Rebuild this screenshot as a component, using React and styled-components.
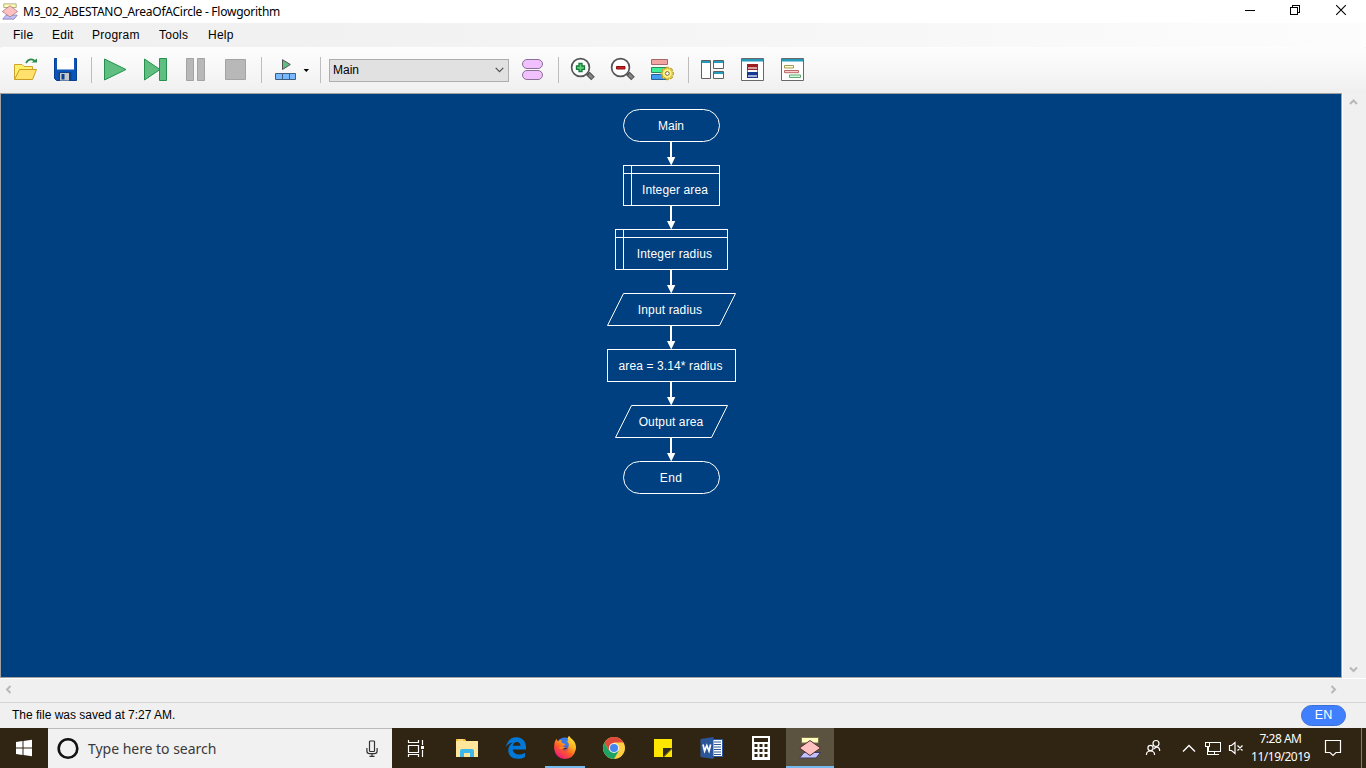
import React from "react";
import styled, { createGlobalStyle } from "styled-components";

const Global = createGlobalStyle`
  html, body { margin: 0; padding: 0; background: #f0f0f0; overflow: hidden; }
  * { box-sizing: border-box; }
  svg { display: block; flex: none; }
`;
const arial = `"Liberation Sans", Arial, sans-serif`;
const segoe = `"Noto Sans", "Open Sans", sans-serif`;

const Screen = styled.div`
  width: 1366px; height: 768px; display: flex; flex-direction: column;
  font-family: ${arial}; font-size: 12px; color: #000; background: #f0f0f0;
`;
const TitleBar = styled.header`
  height: 23px; background: #fff; display: flex; align-items: center; padding-left: 2px;
  font-family: ${segoe};
`;
const TitleText = styled.span`
  margin-left: 5px; flex: 1; letter-spacing: -0.25px; font-size: 12px; line-height: 22px; white-space: nowrap;
`;
const Menu = styled.nav`
  height: 24px; display: flex; align-items: center;
  background: linear-gradient(90deg, #f0f0f0 0, #f1f1f1 300px, #fcfcfc 1338px, #fdfdfd);
`;
const MenuItem = styled.span`
  width: ${p => p.$w}px; letter-spacing: 0.25px; line-height: 24px; white-space: nowrap;
  &:first-child { margin-left: 13px; }
`;
const Toolbar = styled.div`
  height: 46px; display: flex; align-items: center; padding-left: 5px;
  background: linear-gradient(#fdfdfd, #f7f7f7 50%, #efefef);
  border-radius: 3px 2px 0 0;
`;
const Sep = styled.i`
  width: 10px; height: 26px; padding-left: ${p => p.$o || 6}px;
  &::before { content: ""; display: block; width: 1px; height: 26px; background: #bdbdbd; }
`;
const Combo = styled.div`
  width: 180px; height: 23px; margin: 0 3px 0 4px; padding: 0 4px 0 3px;
  border: 1px solid #adadad; background: #e1e1e1; display: flex; align-items: center; justify-content: space-between;
`;
const Work = styled.main`height: 585px; display: flex;`;
const Canvas = styled.section`
  width: 1342px; background: #004080; border: 1px solid #a0a0a0; padding: 15px 0 0 1px;
  display: flex; flex-direction: column; align-items: center;
`;
const VScroll = styled.div`
  width: 24px; border-left: 1px solid #fff; display: flex; flex-direction: column; justify-content: space-between;
  align-items: center; padding: 4px 2px 4px 0;
`;
const HScroll = styled.div`
  height: 24px; border-top: 1px solid #fff; display: flex; align-items: center; justify-content: space-between;
  padding: 0 28px 2px 4px;
`;
const Status = styled.footer`
  height: 26px; border-top: 1px solid #d5d5d5; display: flex; align-items: center; justify-content: space-between;
  padding: 0 20px 0 12px; white-space: nowrap;
`;
const StatusText = styled.span`line-height: 24px; height: 25px;`;
const Lang = styled.span`
  width: 45px; height: 21px; border-radius: 11px; background: #4080ff; border: 1px solid #3a70d8; color: #fff;
  font-size: 12.5px; line-height: 18px; text-align: center;
`;
const NodeBox = styled.div`
  width: ${p => p.$w}px; height: ${p => p.$h}px; display: grid; flex: none; color: #fff;
  > * { grid-area: 1 / 1; }
`;
const Label = styled.span`
  align-self: end; height: 32px; line-height: 32px; text-align: center; letter-spacing: ${p => p.$ls}px;
  padding: 0 ${p => p.$pr || 0}px 0 ${p => p.$pl || 0}px; white-space: nowrap;
`;
const Taskbar = styled.div`
  height: 40px; background: #302412; display: flex; color: #fff; font-family: ${segoe};
`;
const Search = styled.div`
  width: 344px; background: #f1f1f1; border-top: 1px solid #bbb; display: flex; align-items: center; color: #3a3a3a;
  padding: 0 13px 0 8px;
`;
const SearchText = styled.span`
  flex: 1; margin-left: 8px; font-size: 14px; letter-spacing: -0.03px; white-space: nowrap;
`;
const Task = styled.div`
  width: 48px; height: 40px; margin-right: ${p => p.$gap ?? 1}px; background: ${p => (p.$active ? "#5b523f" : "none")};
  display: flex; flex-direction: column; align-items: center;
  &::after { content: ""; height: 2px; width: ${p => (p.$active ? 48 : 40)}px; background: ${p => (p.$line ? "#76b9ed" : "none")}; }
`;
const Tray = styled.div`
  margin-left: auto; display: flex;
`;
const Clock = styled.div`
  width: 72px; text-align: center; font-size: 12px; line-height: 18px; padding: 2px 1px 0 0;
  letter-spacing: -0.5px; white-space: nowrap;
`;
const ShowDesktop = styled.i`margin-left: 5px; width: 5px; border-left: 1px solid #857d70;`;

/* Toolbar drawings use window coordinates, shown through a cell-wide view. */
const Cell = ({ x, w = 40, children }) => (
  <svg width={w} height="46" viewBox={`${x} 47 ${w} 46`}>{children}</svg>
);
/* Taskbar drawings: 48 x 38 cell centred on 24,20. */
const TaskIcon = ({ children }) => <svg width="48" height="38" viewBox="0 0 48 38">{children}</svg>;

const Chevron = ({ dir }) => {
  const d = { up: "M1 7L4.5 3.5L8 7", down: "M1 2.5L4.5 6L8 2.5", left: "M6.5 1L3 4.5L6.5 8", right: "M2.5 1L6 4.5L2.5 8" }[dir];
  return <svg width="9" height="9"><path d={d} fill="none" stroke="#b8b8b8" strokeWidth="2" /></svg>;
};

const Logo = () => (
  <svg width="16" height="17" viewBox="0 0 22 23">
    <path d="M2.5 1H19.5V6H2.5Z" fill="#ffffb8" stroke="#99926a" />
    <path d="M5.5 16.5H21L16.5 22H1Z" fill="#c0c0ff" stroke="#7873a0" />
    <path d="M11 3.5L21.5 11.5L11 19L.5 11.5Z" fill="#ffc0c0" stroke="#a0707a" />
  </svg>
);

const Shape = ({ kind, w, h }) => {
  const r = w - 0.5, b = h - 0.5;
  return (
    <svg width={w} height={h} fill="none" stroke="#fff">
      {kind === "terminal" && <rect x=".5" y=".5" width={w - 1} height={h - 1} rx="16" />}
      {(kind === "declare" || kind === "assign") && <rect x=".5" y=".5" width={w - 1} height={h - 1} />}
      {kind === "declare" && <path d={`M8.5 0V${h}M0 8.5H${w}`} />}
      {kind === "io" && <path d={`M16.5 .5H${r}L${r - 16} ${b}H.5Z`} />}
    </svg>
  );
};
const Arrow = () => (
  <svg width="9" height="23" viewBox="0 0 9 23" fill="#fff">
    <path d="M3 0H5V15H8.3L4.5 23H4L0 15H3Z" />
  </svg>
);
const nodes = [
  { kind: "terminal", w: 97, h: 33, text: "Main", pr: 1, ls: 0 },
  { kind: "declare", w: 97, h: 41, text: "Integer area", pl: 7, ls: 0.12 },
  { kind: "declare", w: 113, h: 41, text: "Integer radius", pl: 6, ls: 0.15 },
  { kind: "io", w: 129, h: 33, text: "Input radius", pr: 3, ls: 0.14 },
  { kind: "assign", w: 129, h: 33, text: "area = 3.14* radius", pr: 2, ls: 0.12 },
  { kind: "io", w: 113, h: 33, text: "Output area", pr: 1, ls: 0.12 },
  { kind: "terminal", w: 97, h: 33, text: "End", pr: 1, ls: 0.3 },
];

const Magnifier = ({ x, children }) => (
  <Cell x={x}>
    <g transform={`translate(${x - 562} 0)`}>
      <path d="M588 73.5L593 78.5" stroke="#4c4c4c" strokeWidth="5" />
      <path d="M588.5 74L592.5 78" stroke="#858585" strokeWidth="2.8" />
      <path d="M586 71.5L589 74.5" stroke="#555" strokeWidth="2" />
      <circle cx="580.5" cy="67.5" r="8.9" fill="#fff" stroke="#555" strokeWidth="1.7" />
      {children}
    </g>
  </Cell>
);

const gear = Array.from({ length: 8 }, (_, i) => i * 45);

export default function App() {
  return (
    <Screen>
      <Global />
      <TitleBar>
        <Logo />
        <TitleText>M3_02_ABESTANO_AreaOfACircle - Flowgorithm</TitleText>
        <svg width="136" height="23" viewBox="1230 0 136 23" fill="none" stroke="#000" shapeRendering="crispEdges">
          <path d="M1245 10.5H1255M1290.5 7.5H1297.5V14.5H1290.5ZM1292.5 7V5.5H1299.5V12.5H1298" />
          <path d="M1336.2 5.2L1345.8 14.8M1345.8 5.2L1336.2 14.8" shapeRendering="auto" strokeWidth="1.1" />
        </svg>
      </TitleBar>
      <Menu>
        <MenuItem $w={39}>File</MenuItem>
        <MenuItem $w={40}>Edit</MenuItem>
        <MenuItem $w={67}>Program</MenuItem>
        <MenuItem $w={49}>Tools</MenuItem>
        <MenuItem $w={40}>Help</MenuItem>
      </Menu>
      <Toolbar>
        <Cell x={5}>
          <path d="M14.5 79V64.5H22L24 66.5H32.5V71" fill="#fff06a" stroke="#cda52c" />
          <path d="M14.5 79.5L19.5 69.5H36.5L32.5 79.5Z" fill="#ffe16c" stroke="#cf9c22" />
          <path d="M26 63Q28 59.3 31 59.3Q34 59.3 35 62" fill="none" stroke="#2c8c4c" strokeWidth="1.7" />
          <path d="M31.5 62.5H37V58.5Z" fill="#2c8c4c" />
        </Cell>
        <Cell x={45}>
          <path d="M54.5 58.5H76.5V80.5H56.5L54.5 78.5Z" fill="#0a55b8" stroke="#083f91" />
          <path d="M57 58H74V69.5H57Z" fill="#fff" />
          <path d="M58.5 72H71.5V81H58.5Z" fill="#10408a" />
          <path d="M60 73H69V80.5H60Z" fill="#c8c8c8" />
          <path d="M61.5 74H64.5V79.5H61.5Z" fill="#0a4490" />
        </Cell>
        <Sep />
        <Cell x={95}><path d="M104.5 59L126 69.5L104.5 80Z" fill="#60bf80" stroke="#24924d" /></Cell>
        <Cell x={135}>
          <path d="M144.5 59L160 69.5L144.5 80Z" fill="#60bf80" stroke="#24924d" />
          <path d="M159.5 58.5H166.5V80.5H159.5Z" fill="#60bf80" stroke="#24924d" />
        </Cell>
        <Cell x={175}><path d="M186.5 58.5H193.5V80.5H186.5ZM197.5 58.5H204.5V80.5H197.5Z" fill="#b8b8b8" stroke="#a3a3a3" /></Cell>
        <Cell x={215}><path d="M225.5 59.5H245.5V79.5H225.5Z" fill="#b8b8b8" stroke="#a3a3a3" /></Cell>
        <Sep />
        <Cell x={265} w={50}>
          <path d="M282.5 59.7L290.3 64.5L282.5 69.5Z" fill="#60bf80" stroke="#505050" />
          <path d="M275.5 73.5H295.5V79.5H275.5ZM282.5 73V80M289.5 73V80" fill="#78b9ff" stroke="#3f5f80" />
          <path d="M303.6 69H309L306.3 72Z" />
        </Cell>
        <Sep $o={5} />
        <Combo>Main<svg width="9" height="6"><path d="M.7 .8L4.5 4.6L8.3 .8" fill="none" stroke="#505050" strokeWidth="1.2" /></svg></Combo>
        <Cell x={512}>
          <g fill="#f0c0ff" stroke="#8a7095"><rect x="522.5" y="59.5" width="20" height="9" rx="4.5" /><rect x="522.5" y="70.5" width="20" height="9" rx="4.5" /></g>
        </Cell>
        <Sep />
        <Magnifier x={562}>
          <path d="M579 63.5H582V66H584.5V69.3H582V71.5H579V69.3H576.5V66H579Z" fill="#60d080" stroke="#157a35" strokeWidth="1.3" />
        </Magnifier>
        <Magnifier x={602}><path d="M576.5 66.5H585V69H576.5Z" fill="#d02020" stroke="#8c1010" /></Magnifier>
        <Cell x={642}>
          <path d="M651.5 59.5H667.5V64.5H651.5Z" fill="#f4a3a3" stroke="#a46a6a" />
          <path d="M651.5 67.5H667.5V72.5H651.5Z" fill="#40f098" stroke="#278a58" />
          <path d="M651.5 74.5H667.5V79.5H651.5Z" fill="#409cf0" stroke="#28609a" />
          <g transform="translate(667.3 73.5)">
            {gear.map(a => <path key={a} d="M-1.3 -6.2H1.3V-4H-1.3Z" transform={`rotate(${a})`} fill="#fff080" stroke="#b8a028" />)}
            <circle r="4.9" fill="#fff080" stroke="#c0aa30" strokeWidth=".6" />
            <circle r="1.9" fill="#fff" stroke="#77703a" />
          </g>
        </Cell>
        <Sep />
        <Cell x={692}>
          <path d="M701.5 60.5H710.5V78.5H701.5ZM713.5 60.5H723.5V68.5H713.5ZM713.5 71.5H723.5V78.5H713.5Z" fill="#fff" stroke="#606060" />
          <path d="M702 61H710V63H702ZM714 61H723V63H714ZM714 72H723V74H714Z" fill="#259abb" />
        </Cell>
        <Cell x={732}>
          <path d="M741.5 58.5H763.5V80.5H741.5Z" fill="#fff" stroke="#686868" /><path d="M742 59H763V61.5H742Z" fill="#259abb" />
          <path d="M747 64H758V70H747Z" fill="#9c2020" /><path d="M748 68H757" stroke="#f4dada" strokeWidth="1.4" />
          <path d="M747 72H758V78H747Z" fill="#173a90" /><path d="M748 76H757" stroke="#dde2f6" strokeWidth="1.4" />
          <path d="M747.5 70V72M757.5 70V72" stroke="#777" />
        </Cell>
        <Cell x={772}>
          <path d="M781.5 58.5H803.5V80.5H781.5Z" fill="#fff" stroke="#686868" /><path d="M782 59H803V61.5H782Z" fill="#259abb" />
          <path d="M784.5 65.5H793.5V68H784.5Z" fill="#fffbd0" stroke="#a39b55" />
          <path d="M784.5 70.5H798.5V72.7H784.5Z" fill="#ffd0d0" stroke="#b86868" />
          <path d="M789.5 75H800.5V77.5H789.5Z" fill="#d0ffd8" stroke="#62a772" />
        </Cell>
      </Toolbar>
      <Work>
        <Canvas>
          {nodes.map((n, i) => (
            <React.Fragment key={i}>
              {i > 0 && <Arrow />}
              <NodeBox $w={n.w} $h={n.h}>
                <Shape kind={n.kind} w={n.w} h={n.h} />
                <Label $pl={n.pl} $pr={n.pr} $ls={n.ls}>{n.text}</Label>
              </NodeBox>
            </React.Fragment>
          ))}
        </Canvas>
        <VScroll><Chevron dir="up" /><Chevron dir="down" /></VScroll>
      </Work>
      <HScroll><Chevron dir="left" /><Chevron dir="right" /></HScroll>
      <Status><StatusText>The file was saved at 7:27 AM.</StatusText><Lang>EN</Lang></Status>
      <Taskbar>
        <Task $gap={0}>
          <TaskIcon><path d="M16 14L22.5 13V19.5H16ZM23.5 12.9L32 11.7V19.5H23.5ZM16 20.5H22.5V27L16 26ZM23.5 20.5H32V28.3L23.5 27.1Z" fill="#fff" /></TaskIcon>
        </Task>
        <Search>
          <svg width="24" height="24"><circle cx="12" cy="11.5" r="9.3" fill="none" stroke="#111" strokeWidth="2.6" /></svg>
          <SearchText>Type here to search</SearchText>
          <svg width="14" height="18" fill="none" stroke="#333" strokeWidth="1.2"><rect x="4.5" y="1" width="5" height="10.5" rx=".8" /><path d="M1.9 8V11Q1.9 13.6 4.5 13.6H9.5Q12.1 13.6 12.1 11V8M7 13.6V16.3M4.5 16.3H9.5" /></svg>
        </Search>
        <Task $gap={3}>
          <TaskIcon>
            <path d="M16.5 12V14.5H26.5V12M16.5 17.5H26.5V24.5H16.5ZM16.5 29V26.5H26.5V29M30.5 12V17M30.5 22V29" fill="none" stroke="#fff" strokeWidth="1.2" />
            <path d="M29 18H32V21H29Z" fill="#fff" />
          </TaskIcon>
        </Task>
        <Task>
          <TaskIcon>
            <path d="M13 11H22L23 13H35V29H13Z" fill="#ffe69a" /><path d="M13 11H22V13H13Z" fill="#f7bd25" /><path d="M15 12H20" stroke="#fff4c8" />
            <path d="M17 29V23Q17 21 19 21H29Q31 21 31 23V29H27V25H21V29Z" fill="#3db8ea" />
          </TaskIcon>
        </Task>
        <Task>
          <TaskIcon>
            <path d="M14 19.2C15 12.8 19 9.3 24.4 9.3C30.3 9.3 34 13.8 34 19V21.6H20.8C21.2 25.1 23.9 26.5 26.8 26.5C29.3 26.5 31.5 25.7 33 24.7V29C30.8 30.3 28.3 30.8 25.6 30.8C19.9 30.8 16.3 27.3 16.3 22.3C16.3 18.5 18.6 15.7 21.3 14.5C18 14.6 15.5 16.7 14 19.2ZM20.9 17.8H28.5C28.5 15.5 27 13.9 24.8 13.9C22.8 13.9 21.2 15.5 20.9 17.8Z" fill="#0078d7" fillRule="evenodd" />
          </TaskIcon>
        </Task>
        <Task $line>
          <TaskIcon>
            <defs><linearGradient id="fox" x1="0.85" y1="0" x2="0.2" y2="1"><stop offset="0" stopColor="#fff04a" /><stop offset=".35" stopColor="#ffb01e" /><stop offset=".62" stopColor="#ff5a28" /><stop offset="1" stopColor="#e8108c" /></linearGradient></defs>
            <path d="M16 15Q18 10.5 22.5 9.6Q26 9.2 28.5 11L29 20H19Z" fill="#3a7be8" />
            <path d="M13.2 18Q13.2 13.2 15.8 10.7Q15.8 12.6 17 13.3Q18.6 12 20.5 11.8Q19.6 13.6 21 15L24.3 16Q24 17.6 21.4 18.4Q20.8 20.6 22.8 21.4Q26.3 21.6 27.6 18.5Q28.4 15.5 26 13Q26.9 12.6 27.6 13Q25.6 10.6 28 7.8Q29.5 10.4 32 12Q35.8 16 34.8 21.5Q32.5 30.8 24 31Q14.5 30.6 13.2 21Z" fill="url(#fox)" />
            <circle cx="24.3" cy="20.4" r="3" fill="#7a3aaf" opacity=".35" />
            <path d="M17.5 19.5Q20.5 22.5 24.4 19.6Q22.4 18.4 21.2 18.5Z" fill="#ff8a1e" />
          </TaskIcon>
        </Task>
        <Task>
          <TaskIcon>
            <circle cx="24" cy="20" r="11" fill="#ffd044" />
            <path d="M24 20L14.5 14.5A11 11 0 0 1 33.5 14.5H24Z" fill="#df4a3c" />
            <path d="M14.5 14.5A11 11 0 0 0 24 31L28.8 22.8L19.2 22.8Z" fill="#1ea362" />
            <path d="M14.5 14.5L19.5 23L24 14.5Z" fill="#df4a3c" />
            <circle cx="24" cy="20" r="5.1" fill="#f3f3f3" /><circle cx="24" cy="20" r="4" fill="#4587f0" />
          </TaskIcon>
        </Task>
        <Task>
          <TaskIcon><path d="M15 11H33V20L24 29H15Z" fill="#ffe600" /><path d="M24 20H33L24 29Z" fill="#2f2a1e" /><path d="M25 29L33 21V29Z" fill="#ffe600" /></TaskIcon>
        </Task>
        <Task>
          <TaskIcon>
            <path d="M24 11.5H34.5V28.5H24Z" fill="#fff" stroke="#2b579a" />
            <path d="M26 14H33M26 16.5H33M26 19H33M26 21.5H33M26 24H33M26 26.5H33" stroke="#2b579a" />
            <path d="M12.5 11L25.5 9V31L12.5 29Z" fill="#2b579a" />
            <path d="M15 16.5L16.6 23L18.8 17.5L21 23L22.6 16.5" fill="none" stroke="#fff" strokeWidth="1.7" />
          </TaskIcon>
        </Task>
        <Task>
          <TaskIcon>
            <path d="M15 8H33V32H15Z" fill="#fff" /><path d="M17 10H31V14H17Z" fill="#302412" />
            <path d="M17.5 17.5H30.5M17.5 22.5H30.5M17.5 27.5H30.5" stroke="#302412" strokeWidth="3" strokeDasharray="3 2" />
          </TaskIcon>
        </Task>
        <Task $active $line>
          <TaskIcon>
            <path d="M15.5 9.5H32.5V15H15.5Z" fill="#ffffc0" stroke="#77704a" />
            <path d="M18 24.5H34.5L30 30H13.5Z" fill="#c0c0ff" stroke="#3f3a60" />
            <path d="M24 12.5L34.5 20L24 27.5L13.5 20Z" fill="#ffc0c0" stroke="#553038" />
          </TaskIcon>
        </Task>
        <Tray>
          <svg width="105" height="40" viewBox="1140 728 105 40" fill="none" stroke="#fff" strokeWidth="1.2">
            <circle cx="1156" cy="743.5" r="3" /><circle cx="1150.5" cy="748" r="2.6" />
            <path d="M1146.5 755V754Q1146.8 751 1150.5 751Q1154.2 751 1154.5 754V755M1154 749Q1155.3 747 1157 747.2Q1159.7 747.5 1159.7 751" />
            <path d="M1183 751.5L1189 745.5L1195 751.5" strokeWidth="1.4" />
            <g shapeRendering="crispEdges"><path d="M1209.5 742.5H1220.5V751.5H1208.5V747M1214.5 752V754.5M1210 754.5H1219" strokeWidth="1" /><path d="M1205.5 742.5H1209.5V746.5H1205.5ZM1207.5 747V754.5H1212" strokeWidth="1" /></g>
            <path d="M1229.5 745.5H1231.5L1235 742.5V753.5L1231.5 750.5H1229.5ZM1237.5 745.5L1242.5 750.5M1242.5 745.5L1237.5 750.5" />
          </svg>
          <Clock>7:28 AM<br />11/19/2019</Clock>
          <svg width="39" height="40" viewBox="1317 728 39 40" fill="none" stroke="#fff" strokeWidth="1.2"><path d="M1325.5 740.5H1340.5V752.5H1336L1333 755.5L1330 752.5H1325.5Z" /></svg>
          <ShowDesktop />
        </Tray>
      </Taskbar>
    </Screen>
  );
}
